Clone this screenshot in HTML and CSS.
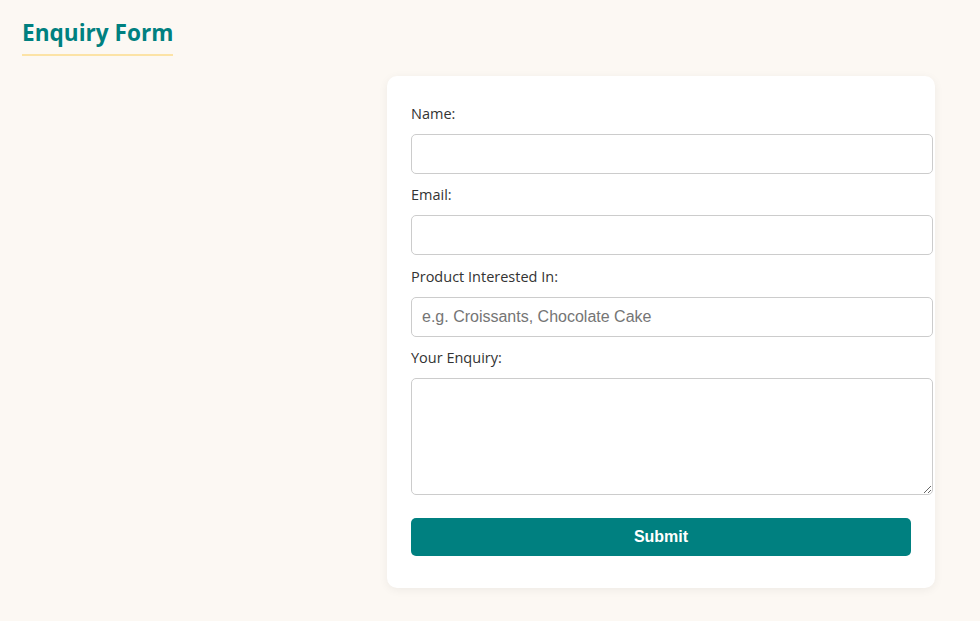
FILE: index.html
```html
<!DOCTYPE html>
<html lang="en">
<head>
<meta charset="utf-8">
<title>Enquiry Form</title>
<link rel="stylesheet" href="styles.css">
</head>
<body>
  <header class="page-header">
    <h2 class="section-title">Enquiry Form</h2>
  </header>
  <main class="layout">
    <form class="enquiry-card">
      <label class="field-label" for="name">Name:</label>
      <input class="field-input" type="text" id="name">
      <label class="field-label" for="email">Email:</label>
      <input class="field-input" type="email" id="email">
      <label class="field-label" for="product">Product Interested In:</label>
      <input class="field-input" type="text" id="product" placeholder="e.g. Croissants, Chocolate Cake">
      <label class="field-label" for="enquiry">Your Enquiry:</label>
      <textarea class="field-input field-area" id="enquiry"></textarea>
      <button class="submit-btn" type="button">Submit</button>
    </form>
  </main>
</body>
</html>
```
FILE: styles.css
```css
html, body {
  margin: 0;
  padding: 0;
}
body {
  background: #fcf8f3;
  font-family: "Open Sans", "Noto Sans", sans-serif;
  color: #333;
  min-height: 621px;
}
.page-header {
  padding: 18px 22px 0;
}
.section-title {
  display: inline-block;
  margin: 0;
  padding-bottom: 6px;
  font-size: 22.6px;
  line-height: 30px;
  font-weight: 700;
  color: #008080;
  border-bottom: 2px solid #fce3a6;
}
.layout {
  display: flex;
  justify-content: flex-end;
  padding: 20px 45px 0 0;
}
.enquiry-card {
  width: 500px;
  background: #fff;
  border-radius: 10px;
  box-shadow: 0 2px 10px rgba(0, 0, 0, 0.06);
  padding: 28px 24px 32px;
}
.field-label {
  display: block;
  font-size: 14.5px;
  line-height: 20px;
  margin-bottom: 10px;
  color: #333;
}
.field-input {
  display: block;
  width: 100%;
  padding: 10px;
  margin: 0 0 11.4px;
  border: 1px solid #ccc;
  border-radius: 5px;
  font-family: "Liberation Sans", Arial, sans-serif;
  font-size: 16px;
  line-height: 18px;
  color: #333;
  background: #fff;
}
.field-input::placeholder {
  color: #757575;
}
.field-area {
  height: 95px;
  resize: vertical;
  margin-bottom: 23px;
}
.submit-btn {
  display: block;
  width: 500px;
  height: 38px;
  border: none;
  border-radius: 5px;
  background: #008080;
  color: #fff;
  font-family: "Liberation Sans", Arial, sans-serif;
  font-size: 16px;
  font-weight: 700;
  cursor: pointer;
}
```
